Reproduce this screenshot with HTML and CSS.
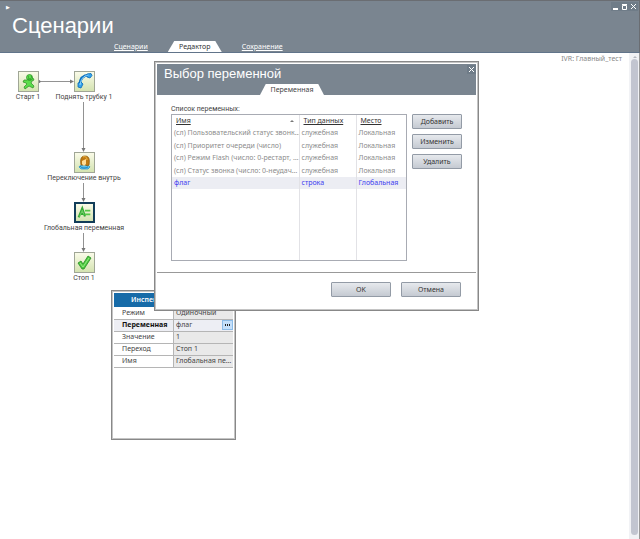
FILE: index.html
```html
<!DOCTYPE html>
<html lang="ru">
<head>
<meta charset="utf-8">
<title>Сценарии</title>
<link rel="stylesheet" href="styles.css">
</head>
<body>
<header class="app-header">
  <div class="title-bar">
    <span class="marker">▶</span>
    <div class="window-controls">
      <button type="button" aria-label="Свернуть"><svg viewBox="0 0 9 9"><path d="M2 7h5" stroke-width="2"/></svg></button>
      <button type="button" aria-label="Развернуть"><svg viewBox="0 0 9 9"><path d="M2.500 3.500h4v4h-4zM2 2.500h5"/></svg></button>
      <button type="button" aria-label="Закрыть"><svg viewBox="0 0 9 9"><path d="M2 2l5 5M7 2L2 7"/></svg></button>
    </div>
  </div>
  <h1>Сценарии</h1>
  <nav class="tabs">
    <a href="#scenarios">Сценарии</a>
    <a href="#editor" class="active">Редактор</a>
    <a href="#save">Сохранение</a>
  </nav>
</header>
<main class="workspace">
  <section class="canvas">
    <p class="ivr">IVR: Главный_тест</p>
    <svg class="links" aria-hidden="true">
      <g fill="none" stroke="#929292"><path d="M39 28.500h33M83.500 47v49M83.500 128v19M83.500 178v19"/></g>
      <g fill="#777"><path d="M70 26.500l4 2-4 2zM81.500 95l2 4 2-4zM81.500 145l2 4 2-4zM81.500 195l2 4 2-4z"/><circle cx="39" cy="28.500" r="1.500"/></g>
    </svg>
    <div class="node start">
      <div class="tile"><svg viewBox="0 0 19 19"><g fill="#5bdc4b" stroke="#278b20" stroke-width=".7"><path d="M8 8L5 8 4 10l3 1 1 1-3 3 1 2 4-3 4 2 1-2-3-3 1-2 2-1-1-2-4 0z"/><circle cx="10.500" cy="5.500" r="3"/></g><path d="M9 5h1M12 5h1M9 7h3" stroke="#177018" stroke-width=".8"/></svg></div>
      <span>Старт 1</span>
    </div>
    <div class="node phone">
      <div class="tile"><svg viewBox="0 0 19 19"><path d="M14 3C8 3 5 7 4.500 13" fill="none" stroke="#0d72c0" stroke-width="2.600"/><path d="M12 2l4-.5 1 2-2 2.500-3-1zM3 11l3-1 2 2-2 4-3-1z" fill="#36a4ed" stroke="#0868b6" stroke-width=".8"/><path d="M13.500 3C8 4 6 7 5 13" fill="none" stroke="#8ed6ff"/></svg></div>
      <span>Поднять трубку 1</span>
    </div>
    <div class="node transfer">
      <div class="tile"><svg viewBox="0 0 19 19"><path d="M4 14c1-3 10-3 11 0l-2 2H6z" fill="#5dc5ef" stroke="#2388c3" stroke-width=".7"/><path d="M6 12C5 6 6 3 10 3s5 3 4 9l-2 1-1-1H8z" fill="#bd7912" stroke="#8b560b" stroke-width=".7"/><path d="M7 8c1-1 3-1 4-2v5l-2 2-2-2z" fill="#ffdc96"/><path d="M8 4c2-1 4 0 4 3" fill="none" stroke="#f4bd4b"/><path d="M5 13c2 3 6 2 8 1" fill="none" stroke="#1c83c2"/></svg></div>
      <span>Переключение внутрь</span>
    </div>
    <div class="node variable selected">
      <div class="tile"><svg viewBox="0 0 19 19"><path d="M3 15L7 5l3 9M5 11h4" fill="none" stroke="#36a936" stroke-width="2.400"/><path d="M10 7.500h6M10 11.500h6" stroke="#56c747" stroke-width="2"/><path d="M4 14L7 7l2 5" fill="none" stroke="#88e57a" stroke-width=".7"/></svg></div>
      <span>Глобальная переменная</span>
    </div>
    <div class="node stop">
      <div class="tile"><svg viewBox="0 0 19 19"><path d="M3 10l3-2 2 3 5-8 3 2-7 11H7z" fill="#4dc83f" stroke="#258d22" stroke-width=".8"/><path d="M5 10l3 4 6-9" fill="none" stroke="#91ed7e"/></svg></div>
      <span>Стоп 1</span>
    </div>

    <section class="inspector">
      <h2>Инспектор</h2>
      <table>
        <tr><th scope="row">Режим</th><td>Одиночный</td></tr>
        <tr class="current"><th scope="row">Переменная</th><td><div class="picker"><span>флаг</span><button type="button" aria-label="Выбрать переменную"><i></i><i></i><i></i></button></div></td></tr>
        <tr><th scope="row">Значение</th><td>1</td></tr>
        <tr><th scope="row">Переход</th><td>Стоп 1</td></tr>
        <tr><th scope="row">Имя</th><td>Глобальная пе…</td></tr>
      </table>
    </section>

    <section class="dialog" role="dialog" aria-labelledby="dialog-title">
      <header class="dialog-header">
        <h2 id="dialog-title">Выбор переменной</h2>
        <button type="button" class="close" aria-label="Закрыть"><svg viewBox="0 0 9 9"><path d="M2 2l5 5M7 2L2 7"/></svg></button>
        <a href="#variable" class="dialog-tab">Переменная</a>
      </header>
      <div class="dialog-body">
        <p id="list-label">Список переменных:</p>
        <div class="list-area">
          <div class="list">
            <table aria-labelledby="list-label">
              <thead><tr><th><div class="sorted"><u>Имя</u><i></i></div></th><th><u>Тип данных</u></th><th><u>Место</u></th></tr></thead>
              <tbody>
                <tr><td>(сл) Пользовательский статус звонк…</td><td>служебная</td><td>Локальная</td></tr>
                <tr><td>(сл) Приоритет очереди (число)</td><td>служебная</td><td>Локальная</td></tr>
                <tr><td>(сл) Режим Flash (число: 0-рестарт, …</td><td>служебная</td><td>Локальная</td></tr>
                <tr><td>(сл) Статус звонка (число: 0-неудач…</td><td>служебная</td><td>Локальная</td></tr>
                <tr class="chosen"><td>флаг</td><td>строка</td><td>Глобальная</td></tr>
                <tr class="filler"><td></td><td></td><td></td></tr>
              </tbody>
            </table>
          </div>
          <div class="side-buttons">
            <button type="button" class="btn">Добавить</button>
            <button type="button" class="btn">Изменить</button>
            <button type="button" class="btn">Удалить</button>
          </div>
        </div>
      </div>
      <footer>
        <button type="button" class="btn">OK</button>
        <button type="button" class="btn">Отмена</button>
      </footer>
    </section>
  </section>
  <div class="scrollbar" aria-hidden="true"><div class="arrow"></div><div class="thumb"></div></div>
</main>
</body>
</html>
```
FILE: styles.css
```css
* { box-sizing: border-box; }
body {
  margin: 0;
  min-height: 100vh;
  display: flex;
  flex-direction: column;
  background: #fff;
  color: #444;
  font: 7px/10px "Noto Sans", sans-serif;
}
h1, h2, p { margin: 0; font-weight: 400; }
button { font: inherit; color: inherit; padding: 0; margin: 0; }
table { border-collapse: collapse; table-layout: fixed; width: 100%; }
th, td { padding: 0; text-align: left; font-weight: 400; white-space: nowrap; overflow: hidden; }

.app-header {
  height: 53px;
  background: #7a8590;
  border-top: 1px solid #6a6d72;
  border-bottom: 1px solid #61748a;
  border-right: 1px solid #6a6d72;
  color: #fff;
  display: flex;
  flex-direction: column;
}
.title-bar { display: flex; justify-content: space-between; height: 12px; padding: 1px 1px 0 6px; }
.marker { font: 5px/11px "DejaVu Sans", sans-serif; }
.window-controls { display: flex; }
.window-controls button, .close {
  width: 9px;
  height: 9px;
  border: 0;
  background: #6f7c88;
  display: flex;
  align-items: center;
}
.window-controls svg, .close svg { width: 9px; height: 9px; fill: none; stroke: #fff; }
.app-header h1 { font: 22px/26px "Liberation Sans", sans-serif; padding-left: 12px; }
.tabs { display: flex; margin-top: auto; padding-left: 114px; height: 11px; line-height: 12px; gap: 20px; }
.tabs a { color: #fff; }
.tabs .active {
  color: #333;
  text-decoration: none;
  background: #fff;
  width: 54px;
  text-align: center;
  height: 11px;
  clip-path: polygon(12% 0, 88% 0, 100% 100%, 0 100%);
}

.workspace { flex: 1; display: flex; border-right: 1px solid #999; }
.canvas { flex: 1; position: relative; }
.ivr { text-align: right; color: #888; padding: 1px 7px 0 0; }
.links { position: absolute; left: 0; top: 0; width: 160px; height: 240px; }
.scrollbar { width: 10px; background: #f1f2f5; padding: 1px 1px 4px 2px; display: flex; flex-direction: column; align-items: center; }
.arrow { border: 2px solid transparent; border-bottom-color: #b5b8c0; height: 4px; margin-bottom: 1px; }
.thumb { flex: 1; width: 7px; background: #c2c5d0; border-radius: 4px; }

.node { position: absolute; width: 100px; display: flex; flex-direction: column; align-items: center; font-family: Roboto, sans-serif; }
.node span { line-height: 10px; background: #fff; }
.tile { width: 21px; height: 21px; border: 1px solid #a0a696; background: linear-gradient(#fafbe8, #d4e3b1); }
.tile svg { display: block; width: 19px; height: 19px; }
.selected .tile { border: 2px solid #123d59; }
.selected svg { width: 17px; height: 17px; }
.start { left: -22px; top: 18px; }
.phone { left: 34px; top: 18px; }
.transfer { left: 34px; top: 99px; }
.variable { left: 34px; top: 149px; }
.stop { left: 34px; top: 199px; }

.inspector {
  position: absolute;
  left: 111px;
  top: 237px;
  width: 125px;
  height: 150px;
  border: 1px solid #888;
  box-shadow: inset 0 0 0 1px #c4c4c4;
  padding: 2px;
  background: #fff;
}
.inspector h2 { background: #176ba8; color: #fff; line-height: 14px; font-size: 7px; font-weight: 600; text-align: center; padding-right: 56px; padding-left: 9px; white-space: nowrap; }
.inspector tr { height: 12px; border-bottom: 1px solid #b5b5b5; }
.inspector th { padding-left: 8px; border-right: 1px solid #b5b5b5; }
.inspector td { padding-left: 2px; background: #e9e9e9; }
.inspector .current { background: #edeef4; }
.inspector .current th { font-weight: 700; color: #111; }
.inspector .current td { background: #edeef4; }
.picker { display: flex; justify-content: space-between; }
.picker button { width: 11px; border: 1px solid #8cbce8; background: #c4dffa; display: flex; align-items: center; justify-content: center; gap: 1px; }
.picker i { width: 1px; height: 2px; background: #222; }

.dialog {
  position: absolute;
  left: 154px;
  top: 8px;
  width: 325px;
  height: 250px;
  border: 1px solid #888;
  box-shadow: inset 0 0 0 1px #c4c4c4;
  padding: 2px;
  background: #fff;
  display: flex;
  flex-direction: column;
}
.dialog-header { height: 31px; background: #7a8590; display: grid; grid-template-columns: 1fr auto; color: #fff; }
.dialog-header h2 { font: 13px/20px "Liberation Sans", sans-serif; padding-left: 7px; }
.close { margin: 1px 0 0; }
.dialog-tab {
  grid-column: 1 / 3;
  margin-left: 103px;
  width: 64px;
  height: 11px;
  line-height: 12px;
  background: #fff;
  color: #444;
  text-align: center;
  text-decoration: none;
  clip-path: polygon(9% 0, 91% 0, 100% 100%, 0 100%);
}
.dialog-body { flex: 1; padding: 9px 14px 0; }
.dialog-body p { font-family: Roboto, sans-serif; }
.list-area { display: flex; gap: 5px; }
.list { flex: 1; border: 1px solid #a8abb3; }
.list th, .list td { height: 12px; padding-left: 2px; border-right: 1px solid #e2e2e6; color: #8c8c8c; }
.list th { padding-left: 4px; color: #333; }
.list tr:nth-child(even) td { height: 13px; }
.list th:first-child { width: 127px; }
.list th:nth-child(2) { width: 57px; }
.list th:last-child, .list td:last-child { border-right: 0; }
.list .chosen td { color: #4040f0; background: #ecedf3; }
.list tr.filler td { height: 71px; }
.sorted { display: flex; align-items: center; justify-content: space-between; padding-right: 5px; }
.sorted i { border: 2px solid transparent; border-bottom-color: #777; border-top: 0; }
.side-buttons { display: flex; flex-direction: column; gap: 5px; }
.btn {
  width: 50px;
  height: 15px;
  border: 1px solid #939ba6;
  border-radius: 1px;
  background: linear-gradient(#e6e9ed, #c5cad2);
  color: #333;
  line-height: 11px;
}
.dialog footer { height: 36px; border-top: 1px solid #999; display: flex; justify-content: flex-end; gap: 10px; padding: 9px 15px 0; }
.dialog footer .btn { width: 60px; }
```
